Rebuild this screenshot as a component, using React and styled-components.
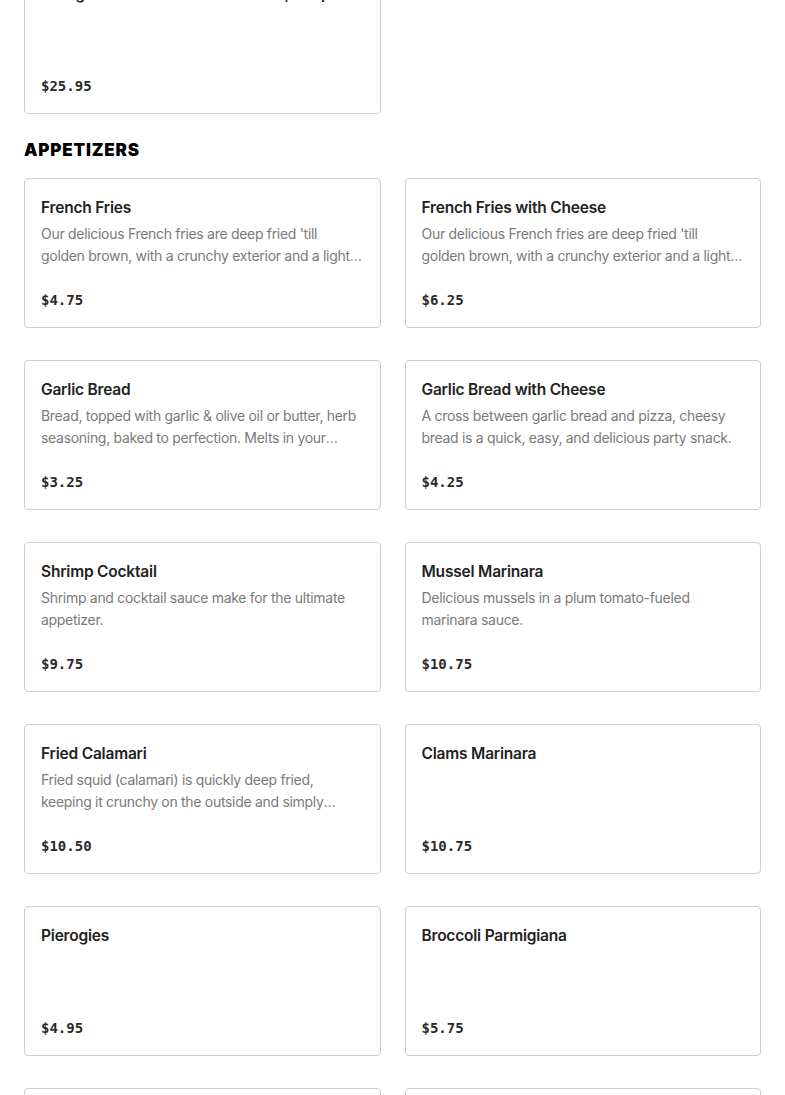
import React from "react";
import styled, { createGlobalStyle } from "styled-components";

const GlobalStyle = createGlobalStyle`
  html, body {
    margin: 0;
    padding: 0;
    background: #fff;
  }
  body {
    font-family: "Inter", "Noto Sans", sans-serif;
    -webkit-font-smoothing: antialiased;
  }
`;

const entrees = [
  {
    name: "Lasagna Italiana with Meat Sauce, Soup or Salad",
    description: "",
    price: "$25.95",
  },
];

const appetizers = [
  {
    name: "French Fries",
    description:
      "Our delicious French fries are deep fried 'till golden brown, with a crunchy exterior and a light and fluffy interior.",
    price: "$4.75",
  },
  {
    name: "French Fries with Cheese",
    description:
      "Our delicious French fries are deep fried 'till golden brown, with a crunchy exterior and a light and fluffy interior.",
    price: "$6.25",
  },
  {
    name: "Garlic Bread",
    description:
      "Bread, topped with garlic & olive oil or butter, herb seasoning, baked to perfection. Melts in your mouth.",
    price: "$3.25",
  },
  {
    name: "Garlic Bread with Cheese",
    description:
      "A cross between garlic bread and pizza, cheesy bread is a quick, easy, and delicious party snack.",
    price: "$4.25",
  },
  {
    name: "Shrimp Cocktail",
    description: "Shrimp and cocktail sauce make for the ultimate appetizer.",
    price: "$9.75",
  },
  {
    name: "Mussel Marinara",
    description: "Delicious mussels in a plum tomato-fueled marinara sauce.",
    price: "$10.75",
  },
  {
    name: "Fried Calamari",
    description:
      "Fried squid (calamari) is quickly deep fried, keeping it crunchy on the outside and simply tender on the inside.",
    price: "$10.50",
  },
  { name: "Clams Marinara", description: "", price: "$10.75" },
  { name: "Pierogies", description: "", price: "$4.95" },
  { name: "Broccoli Parmigiana", description: "", price: "$5.75" },
  { name: "Mozzarella Sticks", description: "", price: "$6.95" },
  { name: "Chicken Wings", description: "", price: "$9.95" },
];

function MenuCard({ item }) {
  return (
    <Card>
      <Name>{item.name}</Name>
      {item.description && <Description>{item.description}</Description>}
      <Price>{item.price}</Price>
    </Card>
  );
}

function App() {
  return (
    <Page>
      <GlobalStyle />
      {/* tail of the previous section, page is scrolled */}
      <Section $scrolled>
        <Grid>
          {entrees.map((item) => (
            <MenuCard key={item.name} item={item} />
          ))}
        </Grid>
      </Section>
      <Section>
        <Heading>APPETIZERS</Heading>
        <Grid>
          {appetizers.map((item) => (
            <MenuCard key={item.name} item={item} />
          ))}
        </Grid>
      </Section>
    </Page>
  );
}

const Page = styled.div`
  padding: 0 24px 40px;
  overflow: hidden;
`;

const Section = styled.section`
  margin-top: ${(p) => (p.$scrolled ? "-36px" : "0")};
`;

const Heading = styled.h2`
  margin: 24px 0 15px;
  font-family: "Inter", "Liberation Sans", sans-serif;
  font-size: 17px;
  line-height: 25px;
  font-weight: 900;
  letter-spacing: 0.8px;
  color: #000;
`;

const Grid = styled.div`
  display: grid;
  grid-template-columns: minmax(0, 1fr) minmax(0, 1fr);
  column-gap: 24px;
  row-gap: 32px;
`;

const Card = styled.div`
  box-sizing: border-box;
  height: 150px;
  display: flex;
  flex-direction: column;
  padding: 16px 16px 17px;
  border: 1px solid #cfcfcf;
  border-radius: 4px;
  background: #fff;
`;

const Name = styled.h3`
  margin: 0;
  font-size: 15.5px;
  line-height: 26px;
  font-weight: 600;
  letter-spacing: -0.2px;
  color: #222;
  white-space: nowrap;
  overflow: hidden;
  text-overflow: ellipsis;
`;

const Description = styled.p`
  margin: 2px 0 0;
  font-size: 14px;
  line-height: 22px;
  letter-spacing: -0.3px;
  color: #7a7a7a;
  display: -webkit-box;
  -webkit-line-clamp: 2;
  -webkit-box-orient: vertical;
  overflow: hidden;
`;

const Price = styled.div`
  margin-top: auto;
  font-family: "DejaVu Sans Mono", "Liberation Mono", monospace;
  font-size: 14px;
  line-height: 20px;
  font-weight: 700;
  color: #2a2a2a;
`;

export default App;
